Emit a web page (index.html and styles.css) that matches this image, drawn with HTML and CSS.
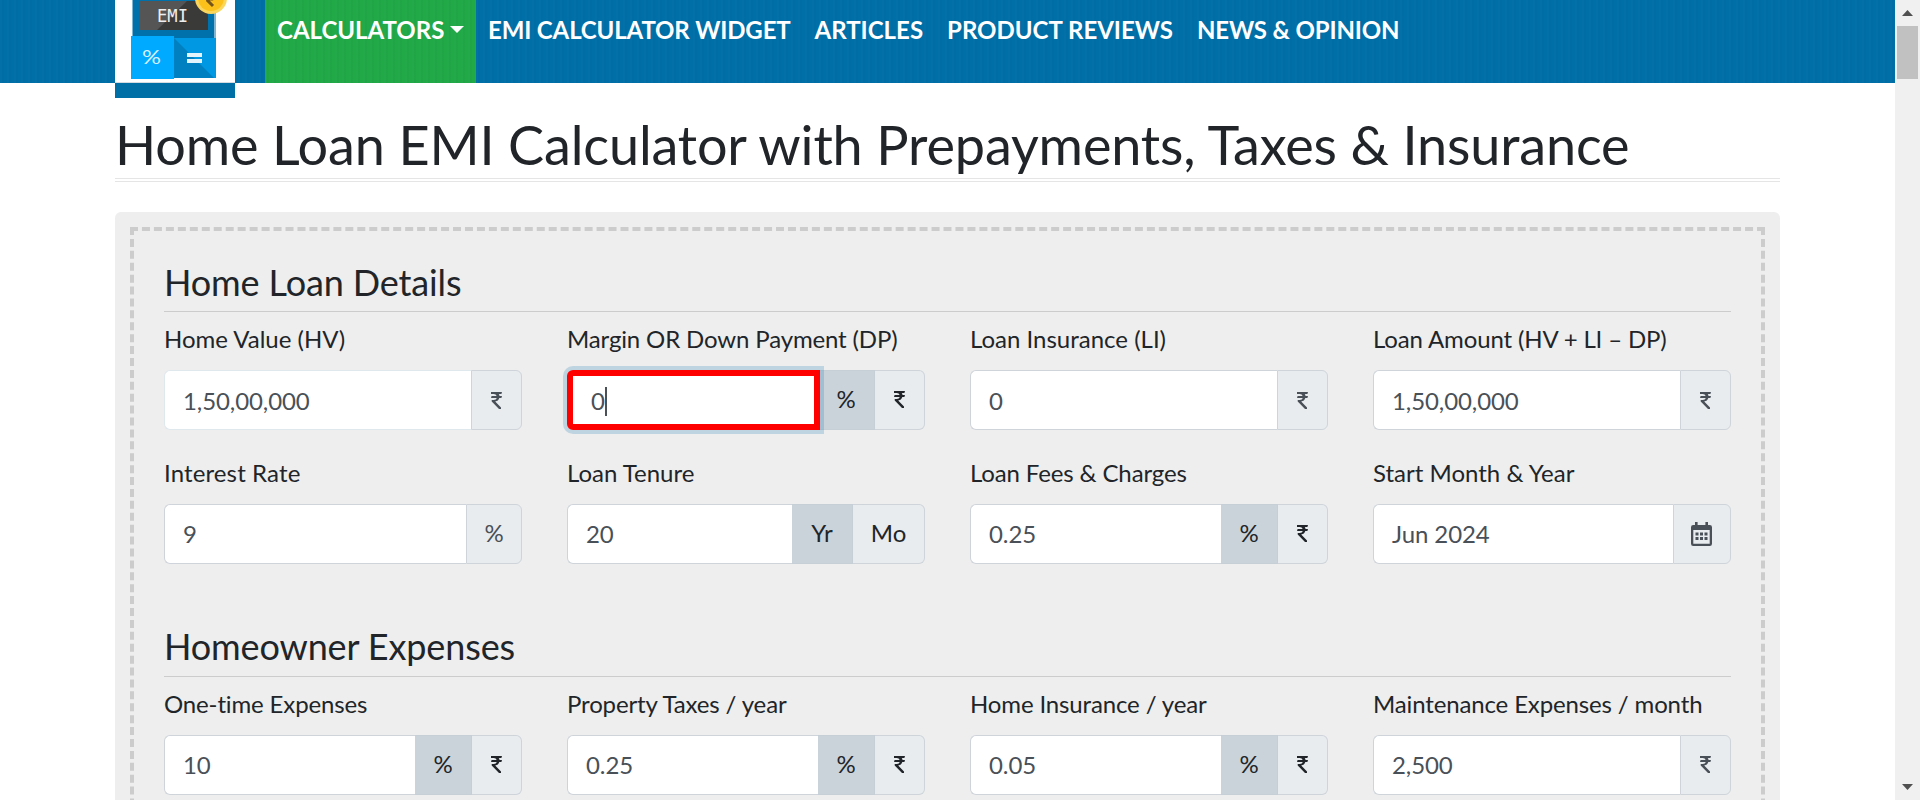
FILE: index.html
```html
<!DOCTYPE html>
<html lang="en">
<head>
<meta charset="utf-8">
<title>Home Loan EMI Calculator</title>
<link rel="stylesheet" href="styles.css">
</head>
<body>
<svg class="defs" width="0" height="0">
  <symbol id="rupee" viewBox="0 0 11 17"><path d="M0 0H11L10.4 2.1H7.7Q8.4 2.8 8.5 3.9H11L10.4 6H8.3Q7.5 9 4.2 9.5L10 15.4V17H8L.7 9.6V7.9H2.8Q5.2 7.9 5.8 6H0L.6 3.9H5.7Q5 2.1 2.8 2.1H0Z" fill="currentColor"/></symbol>
  <symbol id="calendar" viewBox="0 0 21 24"><path fill="currentColor" fill-rule="evenodd" d="M4 0H6.6V3H14.4V0H17V3H18.8Q21 3 21 5.2V21.8Q21 24 18.8 24H2.2Q0 24 0 21.8V5.2Q0 3 2.2 3H4ZM2.3 8V21.7H18.7V8ZM4.5 10.5H7.5V13.5H4.5ZM9 10.5H12V13.5H9ZM13.5 10.5H16.5V13.5H13.5ZM4.5 15H7.5V18H4.5ZM9 15H12V18H9ZM13.5 15H16.5V18H13.5Z"/></symbol>
</svg>
<div class="page">
  <div class="view">
    <header class="header">
      <div class="logo">
        <svg class="logo-art" width="120" height="82" viewBox="0 0 120 82">
          <rect x="17" y="0" width="84" height="38" fill="#0071aa"/>
          <path d="M17 0h1v38h-1zM99 0h2v38h-2z" fill="#7fb4d3"/>
          <rect x="24" y="1" width="69" height="29" fill="#3a3a38"/>
          <path d="M24 1H72L42 30H24Z" fill="#555"/>
          <rect x="16" y="36" width="43" height="43" fill="#00aaff"/>
          <rect x="59" y="38" width="42" height="40" fill="#0098e3"/>
          <path d="M59 38L99 78H59Z" fill="#0080c0"/>
          <path d="M72 53h15v4H72zM72 59h15v4H72z" fill="#e4f4fd"/>
          <circle cx="96" cy="-2" r="16" fill="#fbd65c"/>
          <circle cx="96" cy="-2" r="13" fill="#fcc21b"/>
          <path d="M91 -1H96Q100 -1 101 -5M92 0L98 6" fill="none" stroke="#76541e" stroke-width="3"/>
          <text class="logo-emi" x="42" y="22" textLength="31" lengthAdjust="spacingAndGlyphs">EMI</text>
          <text class="logo-percent" x="27" y="64" textLength="19" lengthAdjust="spacingAndGlyphs">%</text>
        </svg>
      </div>
      <nav class="nav">
        <a class="nav-link active">CALCULATORS<span class="caret"></span></a>
        <a class="nav-link tight">EMI CALCULATOR WIDGET</a>
        <a class="nav-link">ARTICLES</a>
        <a class="nav-link">PRODUCT REVIEWS</a>
        <a class="nav-link tight">NEWS &amp; OPINION</a>
      </nav>
    </header>
    <main class="container">
      <h1 class="title">Home Loan EMI Calculator with Prepayments, Taxes &amp; Insurance</h1>
      <div class="panel">
        <form class="form">
          <h2 class="section">Home Loan Details</h2>
          <div class="grid">
            <div class="field"><label class="label">Home Value (HV)</label>
              <div class="group hover"><span class="input">1,50,00,000</span><span class="addon"><svg class="rupee"><use href="#rupee"/></svg></span></div></div>
            <div class="field"><label class="label tight">Margin OR Down Payment (DP)</label>
              <div class="group"><span class="input focus">0<i class="cursor"></i></span><span class="addon unit on">%</span><span class="addon unit"><svg class="rupee"><use href="#rupee"/></svg></span></div></div>
            <div class="field"><label class="label">Loan Insurance (LI)</label>
              <div class="group"><span class="input">0</span><span class="addon"><svg class="rupee"><use href="#rupee"/></svg></span></div></div>
            <div class="field"><label class="label tight">Loan Amount (HV + LI – DP)</label>
              <div class="group"><span class="input">1,50,00,000</span><span class="addon"><svg class="rupee"><use href="#rupee"/></svg></span></div></div>
            <div class="field lower"><label class="label loose">Interest Rate</label>
              <div class="group"><span class="input">9</span><span class="addon percent">%</span></div></div>
            <div class="field lower"><label class="label">Loan Tenure</label>
              <div class="group"><span class="input">20</span><span class="addon unit on year">Yr</span><span class="addon unit month">Mo</span></div></div>
            <div class="field lower"><label class="label tight">Loan Fees &amp; Charges</label>
              <div class="group"><span class="input">0.25</span><span class="addon unit on">%</span><span class="addon unit"><svg class="rupee"><use href="#rupee"/></svg></span></div></div>
            <div class="field lower"><label class="label">Start Month &amp; Year</label>
              <div class="group"><span class="input">Jun 2024</span><span class="addon date"><svg class="calendar"><use href="#calendar"/></svg></span></div></div>
          </div>
          <h2 class="section second">Homeowner Expenses</h2>
          <div class="grid">
            <div class="field lower"><label class="label tight">One-time Expenses</label>
              <div class="group"><span class="input">10</span><span class="addon unit on">%</span><span class="addon unit"><svg class="rupee"><use href="#rupee"/></svg></span></div></div>
            <div class="field lower"><label class="label tight">Property Taxes / year</label>
              <div class="group"><span class="input">0.25</span><span class="addon unit on">%</span><span class="addon unit"><svg class="rupee"><use href="#rupee"/></svg></span></div></div>
            <div class="field lower"><label class="label tight">Home Insurance / year</label>
              <div class="group"><span class="input">0.05</span><span class="addon unit on">%</span><span class="addon unit"><svg class="rupee"><use href="#rupee"/></svg></span></div></div>
            <div class="field lower"><label class="label tight">Maintenance Expenses / month</label>
              <div class="group"><span class="input">2,500</span><span class="addon"><svg class="rupee"><use href="#rupee"/></svg></span></div></div>
          </div>
        </form>
      </div>
    </main>
  </div>
  <div class="scrollbar">
    <svg class="arrow" width="11" height="6"><path d="M5.5 0L11 6H0Z" fill="#505050"/></svg>
    <div class="thumb"></div>
    <svg class="arrow down" width="11" height="6"><path d="M0 0H11L5.5 6Z" fill="#505050"/></svg>
  </div>
</div>
</body>
</html>
```

FILE: styles.css
```css
* { box-sizing: border-box; }
body { margin: 0; overflow: hidden; background: #fff; color: #212529; font: 24px/36px Lato, sans-serif; font-variant-ligatures: none; }
.defs { position: absolute; }
.page { display: flex; height: 800px; overflow: hidden; }
.view { flex: 1; min-width: 0; }
.header {
  display: flex; height: 83px; padding-left: 115px;
  background: repeating-linear-gradient(90deg, rgba(255,255,255,.012) 0 2px, rgba(0,0,0,.015) 2px 4px, transparent 4px 7px), #006fa7;
}
.logo { width: 120px; height: 98px; margin-right: 30px; background: #fff; border-bottom: 15px solid #006fa6; box-shadow: inset 0 -1px #d5dbe0; }
.logo-art { display: block; }
.logo-emi { font: 18px "DejaVu Sans Mono", monospace; fill: #eee; }
.logo-percent { font: 20px Lato, sans-serif; fill: #d9f1ff; }
.nav { display: flex; }
.nav-link { display: flex; padding: 12px 12px 0; font-weight: 700; color: #fff; white-space: nowrap; }
.active { width: 211px; background: repeating-linear-gradient(90deg, rgba(255,255,255,.015) 0 2px, rgba(0,0,0,.015) 2px 4px, transparent 4px 7px), #21a847; }
.caret { margin: 14px 0 0 6px; width: 14px; height: 7px; border: solid transparent; border-width: 7px 7px 0; border-top-color: #fff; }
.container { width: 1665px; margin-left: 115px; }
.title { margin: 30px 0 30px; height: 69px; border-bottom: 4px double #e5e5e5; font-size: 54px; line-height: 63px; font-weight: 400; letter-spacing: -.15px; white-space: nowrap; }
.panel { height: 800px; padding: 15px; border-radius: 6px; background: #eee; }
.form { height: 770px; padding: 30px; border: 4px dashed #ccc; }
.section { margin: 0; height: 51px; border-bottom: 1px solid #ccc; font-size: 36px; line-height: 43px; font-weight: 400; letter-spacing: -.12px; }
.second { margin-top: 62px; line-height: 40px; }
.grid { display: grid; grid-template-columns: repeat(4, 358px); column-gap: 45px; row-gap: 25px; padding-top: 9px; }
.label { display: block; height: 36px; margin-bottom: 13px; white-space: nowrap; }
.tight { letter-spacing: -.14px; }
.loose { letter-spacing: .12px; }
.group { display: flex; height: 60px; }
.input { flex: 1; padding: 12px 18px 0; border: 1px solid #ced4da; border-right: 0; border-radius: 6px 0 0 6px; background: #fff; color: #495057; letter-spacing: -.1px; }
.lower .input { padding-top: 11px; }
.hover .input { border-color: #dfe8ed; }
.addon { display: flex; justify-content: center; width: 51px; height: 60px; padding-top: 10px; border: 1px solid #ced4da; border-radius: 0 6px 6px 0; background: #e9ecef; color: #495057; }
.unit { color: #212529; border-left: 0; width: 50px; }
.on { width: 57px; background: #cbd3da; border-color: #c6cfd6; border-radius: 0; }
.percent { width: 56px; }
.year { width: 61px; }
.month { width: 72px; }
.date { width: 58px; }
.rupee { width: 11px; height: 17px; margin-top: 11px; }
.unit .rupee, .lower .rupee { margin-top: 10px; }
.calendar { width: 21px; height: 24px; margin: 7px 1px 0 0; }
.focus { position: relative; z-index: 1; margin-right: -2px; padding: 7px 18px 0; border: 6px solid #f00; box-shadow: 0 0 0 4px rgba(0,112,168,.2); }
.cursor { display: inline-block; width: 2px; height: 29px; margin-top: -3px; background: #495057; vertical-align: -6px; }
.scrollbar { display: flex; flex-direction: column; align-items: center; width: 25px; padding: 10px 0 12px; background: #f0f0f0; }
.arrow { display: block; }
.thumb { width: 21px; height: 53px; margin-top: 10px; background: #c1c1c1; }
.down { margin-top: auto; margin-bottom: -2px; }
```
